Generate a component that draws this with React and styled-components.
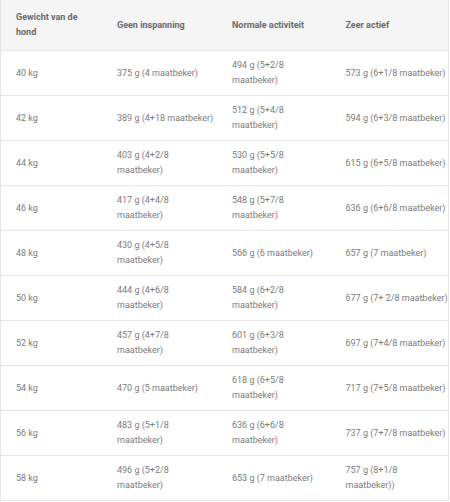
import React from "react";
import styled, { createGlobalStyle } from "styled-components";

const Global = createGlobalStyle`
  body {
    margin: 0;
    background: #fff;
    font-family: Roboto, "Liberation Sans", sans-serif;
  }
`;

const Wrap = styled.div`
  width: 449px;
  border: 1px solid #e6e6e6;
  border-top: none;
  box-sizing: border-box;
`;

const Table = styled.table`
  width: 100%;
  border-collapse: collapse;
  table-layout: fixed;
  font-size: 9px;
  line-height: 15px;
`;

const Head = styled.th`
  background: #f5f5f5;
  color: #6a6a6a;
  font-weight: 700;
  text-align: left;
  height: 50px;
  padding: 0 2px 0 15px;
  vertical-align: middle;
  border-bottom: 1px solid #e6e6e6;

  &:first-child {
    padding-right: 16px;
  }

  &:last-child {
    padding-right: 0;
  }
`;

const Cell = styled.td`
  color: #7b7b7b;
  height: 44px;
  padding: 0 2px 0 15px;
  vertical-align: middle;
  border-bottom: ${({ $last }) => ($last ? "none" : "1px solid #e6e6e6")};

  &:last-child {
    padding-right: 0;
  }
`;

const cols = [101, 115, 113.5, 117.5];

const rows = [
  ["40 kg", "375 g (4 maatbeker)", "494 g (5+2/8 maatbeker)", "573 g (6+1/8 maatbeker)"],
  ["42 kg", "389 g (4+18 maatbeker)", "512 g (5+4/8 maatbeker)", "594 g (6+3/8 maatbeker)"],
  ["44 kg", "403 g (4+2/8 maatbeker)", "530 g (5+5/8 maatbeker)", "615 g (6+5/8 maatbeker)"],
  ["46 kg", "417 g (4+4/8 maatbeker)", "548 g (5+7/8 maatbeker)", "636 g (6+6/8 maatbeker)"],
  ["48 kg", "430 g (4+5/8 maatbeker)", "566 g (6 maatbeker)", "657 g (7 maatbeker)"],
  ["50 kg", "444 g (4+6/8 maatbeker)", "584 g (6+2/8 maatbeker)", "677 g (7+ 2/8 maatbeker)"],
  ["52 kg", "457 g (4+7/8 maatbeker)", "601 g (6+3/8 maatbeker)", "697 g (7+4/8 maatbeker)"],
  ["54 kg", "470 g (5 maatbeker)", "618 g (6+5/8 maatbeker)", "717 g (7+5/8 maatbeker)"],
  ["56 kg", "483 g (5+1/8 maatbeker)", "636 g (6+6/8 maatbeker)", "737 g (7+7/8 maatbeker)"],
  ["58 kg", "496 g (5+2/8 maatbeker)", "653 g (7 maatbeker)", "757 g (8+1/8 maatbeker))"],
];

export default function App() {
  return (
    <>
      <Global />
      <Wrap>
        <Table>
          <colgroup>
            {cols.map((w, i) => (
              <col key={i} style={{ width: w }} />
            ))}
          </colgroup>
          <thead>
            <tr>
              <Head>Gewicht van de hond</Head>
              <Head>Geen inspanning</Head>
              <Head>Normale activiteit</Head>
              <Head>Zeer actief</Head>
            </tr>
          </thead>
          <tbody>
            {rows.map((r, i) => (
              <tr key={i}>
                {r.map((c, j) => (
                  <Cell key={j} $last={i === rows.length - 1}>
                    {c}
                  </Cell>
                ))}
              </tr>
            ))}
          </tbody>
        </Table>
      </Wrap>
    </>
  );
}
